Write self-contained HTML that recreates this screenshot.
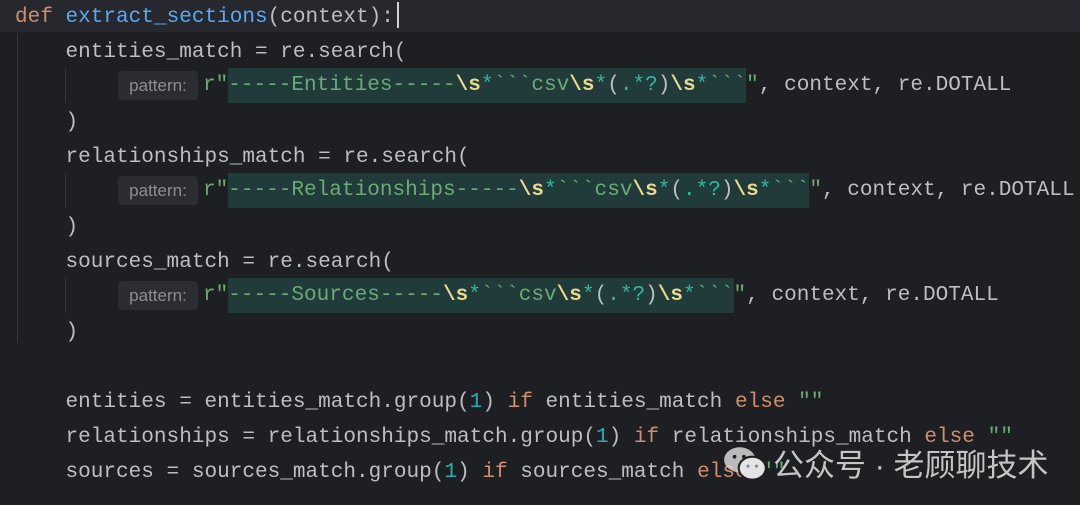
<!DOCTYPE html>
<html><head><meta charset="utf-8"><style>
html,body{margin:0;padding:0}
body{width:1080px;height:505px;background:#1e1f22;position:relative;overflow:hidden;font-family:"Liberation Mono","DejaVu Sans Mono",monospace;font-size:21.05px;color:#bcbec4}
.l{position:absolute;left:15px;height:35px;line-height:35px;white-space:pre}
.k{color:#cf8e6d}.f{color:#56a8f5}.s{color:#6aab73}.e{color:#e8d98b;font-weight:bold}.c{color:#2fbaa3}.n{color:#2aacb8}
.rx{background:#213a3a;display:inline-block;height:35px;vertical-align:top}
.hint{position:absolute;left:118px;width:80px;height:29px;background:#2b2d30;border-radius:4px;font-family:"Liberation Sans",sans-serif;font-size:17px;color:#8b8e95;line-height:29px;text-align:center}
.g{position:absolute;width:1px;background:#35373b}
</style></head><body>
<div style="position:absolute;left:0;top:0;width:1080px;height:32px;background:#26282d"></div>
<div class="g" style="left:17px;top:33px;height:310px"></div>
<div class="g" style="left:65px;top:68px;height:35px"></div>
<div class="g" style="left:65px;top:173px;height:35px"></div>
<div class="g" style="left:65px;top:278px;height:35px"></div>
<div class="l" style="top:0px"><span class="k">def</span> <span class="f">extract_sections</span>(context):</div>
<div style="position:absolute;left:397px;top:2px;width:2px;height:26px;background:#ced0d6"></div>
<div class="l" style="top:35px">    entities_match = re.search(</div>
<div class="hint" style="top:71px">pattern:</div>
<div class="l" style="top:68px;left:203px"><span class="s">r"</span><span class="rx"><span class="s">-----Entities-----</span><span class="e">\s</span><span class="c">*</span><span class="s">&#96;&#96;&#96;csv</span><span class="e">\s</span><span class="c">*</span>(<span class="c">.*?</span>)<span class="e">\s</span><span class="c">*</span><span class="s">&#96;&#96;&#96;</span></span><span class="s">"</span>, context, re.DOTALL</div>
<div class="l" style="top:105px">    )</div>
<div class="l" style="top:140px">    relationships_match = re.search(</div>
<div class="hint" style="top:176px">pattern:</div>
<div class="l" style="top:173px;left:203px"><span class="s">r"</span><span class="rx"><span class="s">-----Relationships-----</span><span class="e">\s</span><span class="c">*</span><span class="s">&#96;&#96;&#96;csv</span><span class="e">\s</span><span class="c">*</span>(<span class="c">.*?</span>)<span class="e">\s</span><span class="c">*</span><span class="s">&#96;&#96;&#96;</span></span><span class="s">"</span>, context, re.DOTALL</div>
<div class="l" style="top:210px">    )</div>
<div class="l" style="top:245px">    sources_match = re.search(</div>
<div class="hint" style="top:281px">pattern:</div>
<div class="l" style="top:278px;left:203px"><span class="s">r"</span><span class="rx"><span class="s">-----Sources-----</span><span class="e">\s</span><span class="c">*</span><span class="s">&#96;&#96;&#96;csv</span><span class="e">\s</span><span class="c">*</span>(<span class="c">.*?</span>)<span class="e">\s</span><span class="c">*</span><span class="s">&#96;&#96;&#96;</span></span><span class="s">"</span>, context, re.DOTALL</div>
<div class="l" style="top:315px">    )</div>
<div class="l" style="top:385px">    entities = entities_match.group(<span class="n">1</span>) <span class="k">if</span> entities_match <span class="k">else</span> <span class="s">""</span></div>
<div class="l" style="top:420px">    relationships = relationships_match.group(<span class="n">1</span>) <span class="k">if</span> relationships_match <span class="k">else</span> <span class="s">""</span></div>
<div class="l" style="top:455px">    sources = sources_match.group(<span class="n">1</span>) <span class="k">if</span> sources_match <span class="k">else</span> <span class="s">""</span></div>
<svg style="position:absolute;left:722px;top:444px" width="48" height="40" viewBox="0 0 46 38">
<ellipse cx="17" cy="15" rx="15" ry="12" fill="#d6d6d6" opacity="0.85"/>
<ellipse cx="29" cy="23" rx="13" ry="11" fill="#e4e4e4" stroke="#1e1f22" stroke-width="2"/>
<circle cx="12" cy="12" r="1.8" fill="#1e1f22"/><circle cx="21" cy="12" r="1.8" fill="#1e1f22"/>
<circle cx="25" cy="21" r="1.5" fill="#888"/><circle cx="33" cy="21" r="1.5" fill="#888"/>
</svg>
<div style="position:absolute;left:773px;top:440px;font-family:'Liberation Sans','Noto Sans CJK SC',sans-serif;font-size:31px;color:#d8d8d8;opacity:0.9;white-space:nowrap">公众号 · 老顾聊技术</div>
</body></html>
